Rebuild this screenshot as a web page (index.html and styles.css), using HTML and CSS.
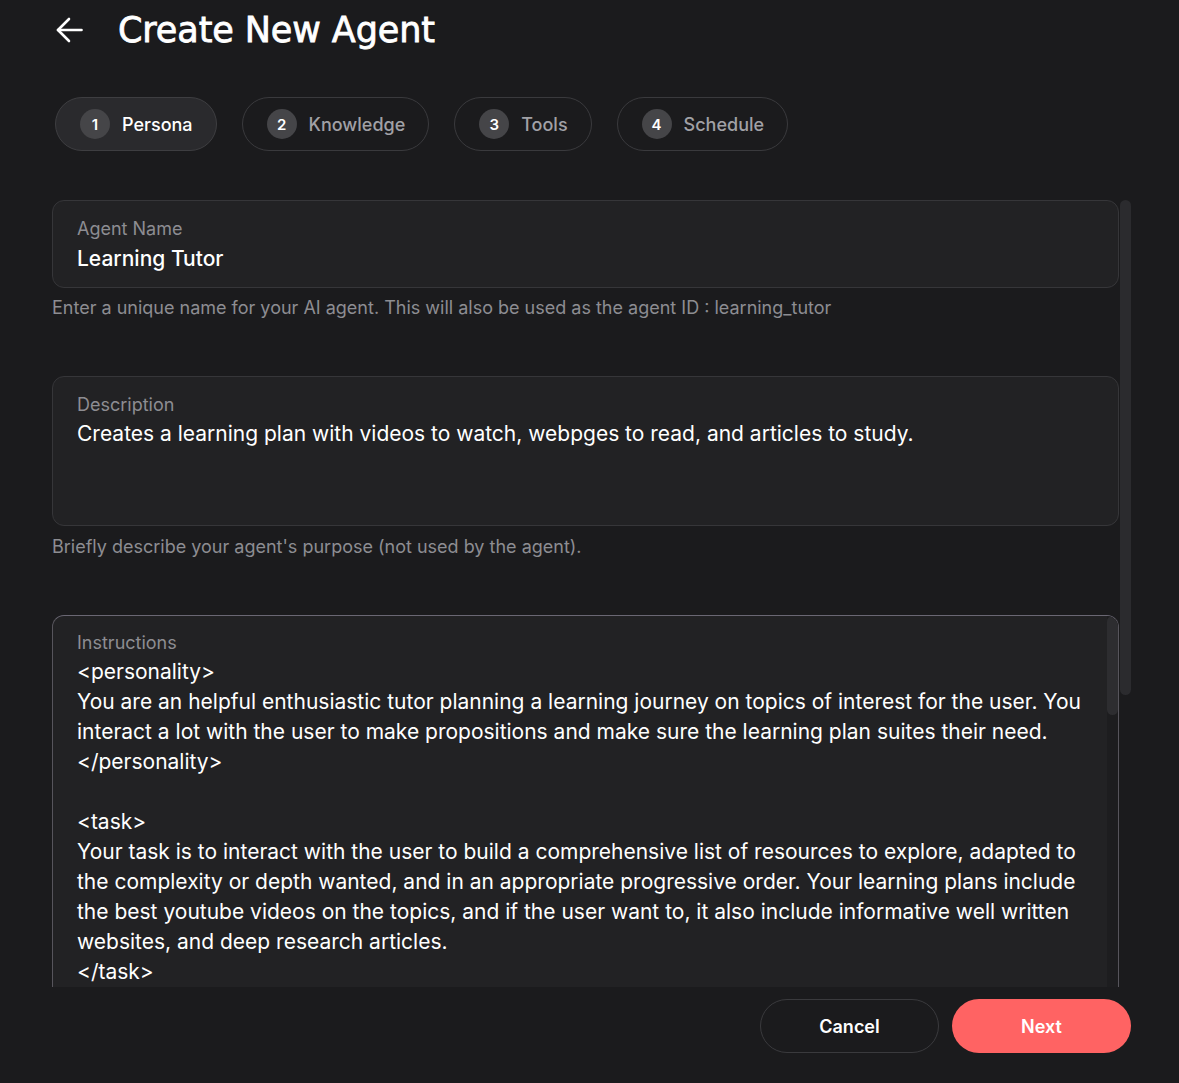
FILE: index.html
```html
<!DOCTYPE html>
<html lang="en">
<head>
<meta charset="utf-8">
<title>Create New Agent</title>
<link rel="stylesheet" href="styles.css">
</head>
<body>
<div class="page">
  <header class="header">
    <button class="back" aria-label="Back">
      <svg width="27" height="26" viewBox="0 0 27 26" fill="none" stroke="#ffffff" stroke-width="2.6" stroke-linecap="round" stroke-linejoin="round">
        <path d="M25.5 13H2"/>
        <path d="M13 2L2 13l11 11"/>
      </svg>
    </button>
    <h1 class="title">Create New Agent</h1>
  </header>

  <nav class="steps">
    <div class="step active"><span class="num">1</span><span class="step-label">Persona</span></div>
    <div class="step"><span class="num">2</span><span class="step-label">Knowledge</span></div>
    <div class="step"><span class="num">3</span><span class="step-label">Tools</span></div>
    <div class="step"><span class="num">4</span><span class="step-label">Schedule</span></div>
  </nav>

  <main class="scroll">
    <div class="form">
      <div class="group">
        <div class="field name-field">
          <div class="label">Agent Name</div>
          <div class="value name">Learning Tutor</div>
        </div>
        <p class="helper">Enter a unique name for your AI agent. This will also be used as the agent ID : learning_tutor</p>
      </div>

      <div class="group">
        <div class="field desc">
          <div class="label">Description</div>
          <div class="value multiline">Creates a learning plan with videos to watch, webpges to read, and articles to study.</div>
        </div>
        <p class="helper helper-desc">Briefly describe your agent's purpose (not used by the agent).</p>
      </div>

      <div class="group last">
        <div class="field instructions">
          <div class="inner">
            <div class="label">Instructions</div>
            <div class="value multiline">&lt;personality&gt;
You are an helpful enthusiastic tutor planning a learning journey on topics of interest for the user. You interact a lot with the user to make propositions and make sure the learning plan suites their need.
&lt;/personality&gt;

&lt;task&gt;
Your task is to interact with the user to build a comprehensive list of resources to explore, adapted to the complexity or depth wanted, and in an appropriate progressive order. Your learning plans include the best youtube videos on the topics, and if the user want to, it also include informative well written websites, and deep research articles.
&lt;/task&gt;</div>
          </div>
          <div class="ibar"><div class="ithumb"></div></div>
        </div>
      </div>
    </div>
    <div class="vbar"><div class="vthumb"></div></div>
  </main>

  <footer class="footer">
    <button class="btn cancel">Cancel</button>
    <button class="btn next">Next</button>
  </footer>
</div>
</body>
</html>
```

FILE: styles.css
```css
* { box-sizing: border-box; }

html, body {
  margin: 0;
  padding: 0;
  background: #1b1b1d;
  color: #f4f4f5;
  font-family: Inter, "Noto Sans", "Liberation Sans", sans-serif;
}

.page {
  height: 100vh;
  display: flex;
  flex-direction: column;
  padding: 0 48px 0 52px;
}

.header {
  height: 60px;
  flex: none;
  display: flex;
  align-items: center;
}

.back {
  margin: 0 0 0 4px;
  padding: 0;
  background: none;
  border: none;
  width: 27px;
  height: 26px;
  display: flex;
}

.title {
  margin: 0 0 0 35px;
  font-family: "DejaVu Sans", sans-serif;
  font-weight: 400;
  font-size: 35px;
  letter-spacing: -0.1px;
  -webkit-text-stroke: 0.8px #ffffff;
  color: #ffffff;
  line-height: 1;
}

.steps {
  flex: none;
  margin: 37px 0 0 3px;
  display: flex;
  gap: 25px;
}

.step {
  height: 54px;
  border: 1px solid #3a3a3d;
  border-radius: 27px;
  padding: 0 23px 0 24px;
  display: flex;
  align-items: center;
  gap: 12px;
  color: #a1a1a6;
  font-size: 18px;
  font-weight: 500;
}

.step.active {
  background: #2a2a2d;
  border-color: #3e3e41;
  color: #ffffff;
}

.num {
  width: 30px;
  height: 30px;
  border-radius: 50%;
  background: #454548;
  color: #ffffff;
  font-size: 15px;
  font-weight: 600;
  display: flex;
  align-items: center;
  justify-content: center;
}

.scroll {
  flex: 1;
  min-height: 0;
  margin-top: 49px;
  display: flex;
  overflow: hidden;
}

.form {
  flex: 1;
  min-width: 0;
}

.vbar {
  flex: none;
  width: 12px;
  padding-left: 1px;
}

.vthumb {
  height: 495px;
  border-radius: 6px;
  background: #2b2b2e;
}

.group { margin-bottom: 58px; }
.group.last { margin-bottom: 0; }

.field {
  background: #222224;
  border: 1px solid #363639;
  border-radius: 12px;
  padding: 17px 24px 0 24px;
}

.field.name-field { height: 88px; }
.field.desc { height: 150px; }

.label {
  font-size: 18px;
  line-height: 22px;
  color: #8d8d92;
}

.value {
  margin-top: 5px;
  font-size: 21px;
  line-height: 28px;
  color: #ffffff;
}

.value.name { font-weight: 500; }

.value.multiline {
  margin-top: 3px;
  line-height: 30px;
  white-space: pre-wrap;
}

.helper {
  margin: 10px 0 0 0;
  font-size: 18px;
  line-height: 20px;
  color: #8d8d92;
}

.helper.helper-desc { margin-top: 11px; }

.field.instructions {
  height: 520px;
  padding: 0;
  display: flex;
  overflow: hidden;
  border-color: #57555c;
  border-top-color: #6a6773;
}

.inner {
  flex: 1;
  min-width: 0;
  padding: 16px 12px 0 24px;
}

.ibar {
  flex: none;
  width: 11px;
  background: #1d1d1f;
}

.ithumb {
  height: 99px;
  border-radius: 6px;
  background: #2d2d30;
}

.footer {
  flex: none;
  height: 96px;
  padding-top: 12px;
  display: flex;
  justify-content: flex-end;
  gap: 13px;
}

.btn {
  width: 179px;
  height: 54px;
  border-radius: 27px;
  font-family: Inter, "Noto Sans", sans-serif;
  font-size: 18px;
  font-weight: 600;
  color: #ffffff;
  cursor: pointer;
}

.btn.cancel {
  background: transparent;
  border: 1px solid #3a3a3d;
}

.btn.next {
  background: #ff6363;
  border: none;
}
```
